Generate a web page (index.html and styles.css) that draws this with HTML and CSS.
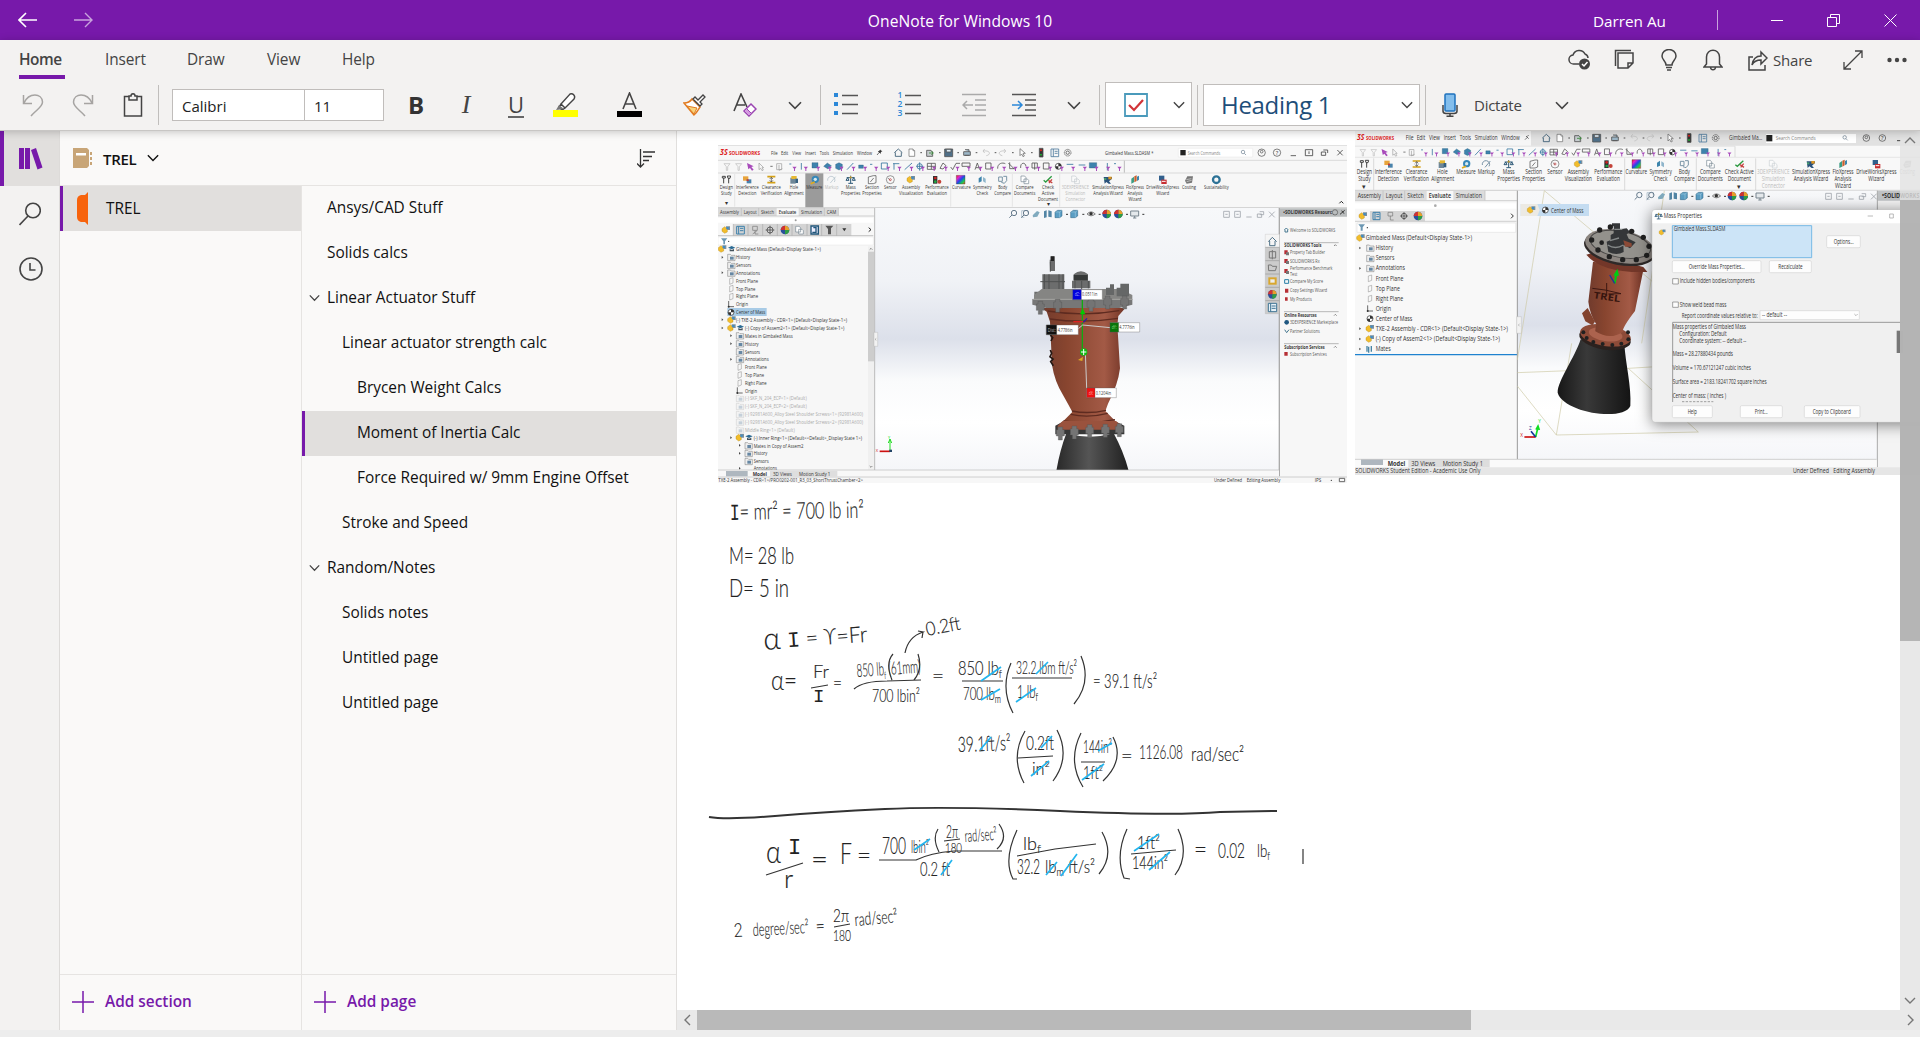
FILE: index.html
```html
<!DOCTYPE html>
<html lang="en">
<head>
<meta charset="utf-8">
<title>OneNote for Windows 10</title>
<link rel="stylesheet" href="styles.css">
</head>
<body>
<svg class="defs" width="0" height="0" aria-hidden="true">
  <defs>
    <symbol id="chev" viewBox="0 0 14 9"><path d="M1 1.2 7 7.4 13 1.2" fill="none" stroke="currentColor" stroke-width="1.6"/></symbol>
    <symbol id="plus" viewBox="0 0 22 22"><path d="M11 0V22M0 11H22" stroke="#7719aa" stroke-width="1.5"/></symbol>
    <g id="asm"><path d="M-12-4-4-10 4-4 4 6-4 10-12 4Z" fill="#f2bd2c" stroke="#a87d10"/><path d="M0-11H12V0H4L0-4Z" fill="#7d8f9c"/><path d="M2-9H8V-3H2Z" fill="#3d8fc4"/></g>
    <g id="cap"><path d="M-11-4 0-9 11-4 0 1Z" fill="#2c6b93"/><path d="M-6 0V7H7V0L0 3Z" fill="#45525c"/></g>
    <g id="fold"><path d="M-11-9H-3L0-6H11V10H-11Z" fill="#eee" stroke="#777" stroke-width="1.5"/><path d="M-4-2H7V7H-4Z" fill="#6687a3"/></g>
    <g id="plane"><path d="M-5-7 5-10V6L-5 10Z" fill="none" stroke="#888" stroke-width="1.5"/></g>
    <g id="org"><path d="M-7-10V7H9" fill="none" stroke="#222" stroke-width="2"/><circle cx="-7" cy="7" r="3"/></g>
    <g id="com"><circle r="9" fill="#fff" stroke="#222" stroke-width="2"/><path d="M0 0V-9A9 9 0 0 1 9 0ZM0 0V9A9 9 0 0 1-9 0Z"/></g>
    <g id="ball"><circle r="13" fill="#2a4f9b"/><path d="M0 0V-13A13 13 0 0 1 13 0Z" fill="#e7a02b"/><path d="M0 0H13A13 13 0 0 1 0 13Z" fill="#2f9d45"/><path d="M0 0H-13A13 13 0 0 1 0-13Z" fill="#cf3232"/></g>
    <g id="filt"><path d="M0 0H13L8 6V13H5V6Z" fill="#a84bbb"/></g>
    <g id="arr"><path d="M-2-4 3 0-2 4Z" fill="#444"/></g>
    <g id="doc" fill="#fff" stroke="#666" stroke-width="2"><path d="M-8-11H4L9-6V11H-8Z"/><path d="M4-11V-6H9"/></g>
    <g id="lens" fill="none" stroke="#687c8d" stroke-width="3"><circle cx="3" cy="-3" r="8"/><path d="M-3 3-11 11"/></g>
    <g id="cube"><path d="M-11-6-3-11H10V6L3 11H-11Z" fill="#5b9ec4" stroke="#2d6380" stroke-width="1.5"/><path d="M-11-6H3V11M3-6 10-11" stroke="#d9edf7" fill="none"/></g>
    <g id="sys" fill="none" stroke="#555" stroke-width="2.5">
      <path d="M-12 53 0 42 12 53M-9 52V64H9V52" stroke="#32566f"/>
      <use href="#doc" x="40" y="53"/><path d="M66 53H71M122 53H127M177 53H182M232 53H237M289 53H294M341 53H346M398 53H403" stroke="#333"/>
      <path d="M85 46H98L103 51V64H85Z" fill="#c7ccd0"/><path d="M92 54H104M99 49 105 54 99 59" stroke="#3a8a3a"/>
      <path d="M139 42H163V65H139Z" fill="#4f6f88"/><path d="M144 43H158V51H144Z" fill="#dcebf5"/>
      <path d="M196 50H216V61H196ZM200 44H212V50M199 61H213" fill="#9db7c8"/>
      <path d="M264 62C279 59 276 45 254 48M254 48 259 42M254 48 259 54" stroke="#c2c2c2"/><path d="M312 62C297 59 300 45 322 48M322 48 317 42M322 48 317 54" stroke="#c2c2c2"/>
      <path d="M365 41V62L370 57 374 65 378 63 374 55H381Z" stroke="#777" fill="#fff"/>
      <path d="M423 40H434V66H423Z" fill="#333"/><circle cx="428" cy="46" r="3" fill="#d22" stroke="none"/><circle cx="428" cy="59" r="3" fill="#2a3" stroke="none"/>
      <path d="M458 42H481V65H458ZM465 42V65M469 49H478M469 55H478" stroke="#4f7c9d"/>
      <circle cx="508" cy="53" r="10" stroke-dasharray="4 2"/><circle cx="508" cy="53" r="5"/>
    </g>
    <g id="filters">
      <g fill="none" stroke="#bbb" stroke-width="2"><path d="M42 86H60L53 95V106H49V95ZM77 86H95L88 95V106H84V95Z"/><path d="M147 84V104L152 100 156 107 160 105 156 98H161ZM200 86H215V104H200ZM207 90V106L217 101" stroke="#999"/></g>
      <path d="M111 84 131 94 124 96 131 104 126 107 120 99 115 103Z" fill="#a84bbb"/><path d="M181 94H188" stroke="#333" stroke-width="2"/>
      <g fill="none" stroke="#33749e" stroke-width="2.5">
        <path d="M238 87H244M274 84V104M411 104 430 84M480 88H487M514 84H532V102H514ZM549 86H568M552 86V104M584 104 606 84M629 82V107M619 94H640" />
        <circle cx="629" cy="94" r="8"/><path d="M652 85H676V103H652ZM664 85V103M652 94H676M690 100 699 84 708 92 699 102ZM722 96 728 104 738 85H750" stroke="#555"/>
        <path d="M756 84H780V94H756ZM795 104 802 84 809 104M798 98H806M827 84H843V102H827ZM863 101C862 84 878 82 886 86M895 84 914 103M899 82V101H914M932 99C930 82 946 80 948 94M966 84H982V99H966ZM974 84V104M1000 84H1017V102H1000Z" stroke="#555"/>
        <path d="M1070 88H1090M1106 90H1126M1192 84V106M1212 86H1218"/>
      </g>
      <g fill="#3e83ad" stroke="#235674"><path d="M306 83H324V99H306ZM341 94 352 84 364 92 354 102ZM377 88 387 83 397 88V100L387 105 377 100ZM446 90H460V100H446ZM1138 83H1160V99H1138Z"/></g>
      <g transform="translate(1045 94)"><use href="#com"/></g>
      <g><use href="#filt" x="247" y="95"/><use href="#filt" x="281" y="95"/><use href="#filt" x="318" y="95"/><use href="#filt" x="353" y="95"/><use href="#filt" x="388" y="95"/><use href="#filt" x="424" y="95"/><use href="#filt" x="459" y="95"/><use href="#filt" x="492" y="95"/><use href="#filt" x="528" y="95"/><use href="#filt" x="562" y="95"/><use href="#filt" x="598" y="95"/><use href="#filt" x="632" y="95"/><use href="#filt" x="666" y="95"/><use href="#filt" x="701" y="95"/><use href="#filt" x="736" y="95"/><use href="#filt" x="770" y="95"/><use href="#filt" x="805" y="95"/><use href="#filt" x="840" y="95"/><use href="#filt" x="876" y="95"/><use href="#filt" x="910" y="95"/><use href="#filt" x="945" y="95"/><use href="#filt" x="979" y="95"/><use href="#filt" x="1014" y="95"/><use href="#filt" x="1049" y="95"/><use href="#filt" x="1083" y="95"/><use href="#filt" x="1118" y="95"/><use href="#filt" x="1153" y="95"/><use href="#filt" x="1188" y="95"/><use href="#filt" x="1222" y="95"/></g>
    </g>
    <g id="i-study"><path d="M-12-10H-3V-5H-12ZM-8-5V11M3-11H13L11-4H5ZM7-4V11" stroke="#444" stroke-width="3" fill="none"/></g>
    <g id="i-inter"><path d="M-13-10H3V3H-13Z" fill="#e8a43b"/><path d="M-2-1H12V11H-2Z" fill="#4a83ab"/><path d="M-2-1H4V4H-2Z" fill="#c33"/></g>
    <g id="i-clear"><path d="M-12-9H12M-12 9H12" stroke="#d4a117" stroke-width="5"/><path d="M0-7V7M-5-2 0-7 5-2M-5 2 0 7 5 2" stroke="#444" stroke-width="2" fill="none"/></g>
    <g id="i-hole"><path d="M-11-6H5V12H-11Z" fill="#6e8798"/><path d="M-8-11H8V-2H-8Z" fill="#e6b832"/><path d="M4-3H12V10H4Z" fill="#35607f"/></g>
    <g id="i-meas"><circle cx="2" cy="-1" r="11" fill="#3687b9"/><circle cx="2" cy="-1" r="5" fill="#d7e9ef"/><path d="M-12 12 0 7" stroke="#dfaa1b" stroke-width="5"/></g>
    <g id="i-mark"><path d="M-12 3A11 11 0 1 1 8 7M-4 10 12-9" fill="none" stroke="#7b95a7" stroke-width="3"/></g>
    <g id="i-mass" fill="none" stroke="#2d5876" stroke-width="3"><path d="M0-12V11M-7 11H7M-12-6H12M-14 2H-5L-9-6ZM5 2H14L9-6Z"/><circle cy="-7" r="2" stroke="#e3a71f"/></g>
    <g id="i-sect" fill="none" stroke="#444" stroke-width="2"><path d="M-11-8 4-12H12V9L4 12H-11ZM-5 7 5-5"/></g>
    <g id="i-sens" fill="none" stroke="#666" stroke-width="2"><circle r="12"/><path d="M0 2-7-5"/><circle r="3" stroke="#b33"/></g>
    <g id="i-perf"><path d="M-12-11H1V12H-12Z" fill="#333"/><circle cx="-5" cy="-5" r="4" fill="#c22"/><circle cx="-5" cy="6" r="4" fill="#2a4"/><circle cx="7" cy="6" r="6" fill="#c34339"/></g>
    <linearGradient id="rain" x2="1" y2="1"><stop stop-color="#e22"/><stop offset=".25" stop-color="#d2c"/><stop offset=".5" stop-color="#24e"/><stop offset=".75" stop-color="#1c5"/><stop offset="1" stop-color="#e52"/></linearGradient>
    <g id="i-curv"><path d="M-13-13H13V13H-13Z" fill="url(#rain)" stroke="#333"/></g>
    <g id="i-symm"><path d="M-11 9V-4L-2-10V5Z" fill="#3e85ac"/><path d="M2-8 10-3V10L2 5Z" fill="#8fb5cb"/></g>
    <g id="i-body" fill="none" stroke="#7994a5" stroke-width="3"><path d="M-12-8H-1V5H-12ZM2-10H12V3L5 11-4 8"/></g>
    <g id="i-comp" fill="#fff" stroke="#778792" stroke-width="2"><path d="M-11-11H0L4-6V6H-11ZM-2-2H8L12 2V12H-2Z"/></g>
    <g id="i-check" fill="none" stroke="#2b9b40" stroke-width="4"><path d="M-13 2-7 7 11-10"/><path d="M1 2 13 10M3 10 12-1" stroke="#c64341"/></g>
    <g id="i-xp"><path d="M-13-8H12V-3L3 5 9 12H2L-5 7-10 12Z" fill="#2b527b"/><path d="M1-9H11V-1H1Z" fill="#db9522"/><path d="M-12-5H-5V1H-12Z" fill="#4a9b6e"/></g>
    <g id="i-flo"><path d="M-11-3-3-9V8L-11 12Z" fill="#3c9c84"/><path d="M-2-10 5-13V4L-2 8Z" fill="#c8602e"/><path d="M6-9 12-12V0L6 4Z" fill="#3d85ad"/></g>
    <g id="i-drive"><path d="M-11-12H5V3H-11Z" fill="#315f8c"/><path d="M-4 0H12V13H-4Z" fill="#c72e32"/><path d="M-2 5H9" stroke="#fff" stroke-width="3"/></g>
    <g id="i-cost"><path d="M-12 3-5-10H12L9 9-7 12Z" fill="#777"/><path d="M-8 0 7-3M-7 6 8 2" stroke="#ddd" stroke-width="2"/></g>
    <g id="view">
      <use href="#lens" x="0" y="0"/><path d="M26-10H45V-2M26-10V10H34" fill="none" stroke="#9bb1bf" stroke-width="2"/><use href="#lens" x="36" y="0"/><path d="M59 4 72-9 80-5 73 8 60 10Z" fill="#80aabe"/><path d="M93-8 101-11V10L93 12ZM106-11 116-8V10L106 8Z" fill="#5285a5"/><use href="#cube" x="137"/><path d="M159 1H165M208 1H214M257 1H263M339 1H345M388 1H394" stroke="#333" stroke-width="3"/><use href="#cube" x="184"/><path d="M222 0Q234-13 247 0 234 11 222 0Z" fill="#ddd" stroke="#555" stroke-width="2"/><circle cx="234" cy="-1" r="5" fill="#333"/><use href="#ball" x="281"/><use href="#ball" x="316"/><path d="M353-9H377V6H353ZM360 12H370M365 6V12" fill="#e5e9ec" stroke="#78858f" stroke-width="3"/>
    </g>
    <g id="mdi" fill="none" stroke="#a1a6ad" stroke-width="2.5"><path d="M0-9H17V9H0M0-9V9M5 0H12M33-9H50V9H33ZM38 0H45M68 8H84M108-8H120V1H108M101-1H114V9H101ZM136-8 153 9M153-8 136 9"/></g>
    <linearGradient id="bg1" x2="0" y2="1"><stop stop-color="#f7f8fa"/><stop offset=".28" stop-color="#f0f2f6"/><stop offset=".5" stop-color="#dce0ea"/><stop offset=".66" stop-color="#fafbfc"/><stop offset=".82" stop-color="#fff"/><stop offset="1" stop-color="#f5f6f9"/></linearGradient>
    <linearGradient id="copper"><stop stop-color="#713b2d"/><stop offset=".3" stop-color="#88452f"/><stop offset=".75" stop-color="#a35a46"/><stop offset="1" stop-color="#713426"/></linearGradient>
    <linearGradient id="blackm"><stop stop-color="#292929"/><stop offset=".45" stop-color="#555"/><stop offset="1" stop-color="#202020"/></linearGradient>
    <linearGradient id="blackn"><stop stop-color="#171717"/><stop offset=".4" stop-color="#393939"/><stop offset="1" stop-color="#141414"/></linearGradient>
    <g id="bolt"><path d="M-7-17H7V-9H12V10H6V22H-6V10H-12V-9H-7Z" fill="#747474" stroke="#505050"/></g>
  </defs>
</svg>

<header class="titlebar">
  <nav class="history">
    <svg width="20" height="16" viewBox="0 0 20 16"><path d="M19 8H1M8 1 1 8 8 15" fill="none" stroke="#fff" stroke-width="1.6"/></svg>
    <svg class="dim" width="20" height="16" viewBox="0 0 20 16"><path d="M1 8H19M12 1 19 8 12 15" fill="none" stroke="#fff" stroke-width="1.4"/></svg>
  </nav>
  <div class="app-name">OneNote for Windows 10</div>
  <div class="window-side">
    <span class="user">Darren Au</span><i class="tsep"></i>
    <span class="winbtn"><svg width="12" height="12"><path d="M0 6.5H12" stroke="#fff"/></svg></span>
    <span class="winbtn"><svg width="13" height="13"><path d="M.5 3.5H9.500V12.500H.5ZM3.500 3V.5H12.500V9.500H10" fill="none" stroke="#fff"/></svg></span>
    <span class="winbtn"><svg width="13" height="13"><path d="M.5.5 12.500 12.500M12.500.5.5 12.500" stroke="#fff"/></svg></span>
  </div>
</header>

<section class="ribbon">
  <div class="tabs">
    <div class="tablist"><a class="tab active">Home</a><a class="tab">Insert</a><a class="tab">Draw</a><a class="tab">View</a><a class="tab">Help</a></div>
    <div class="quick">
      <span class="q cloud"><svg width="24" height="22" viewBox="0 0 24 22" fill="none" stroke="#444" stroke-width="1.5"><path d="M11 15H6A4.500 4.500 0 0 1 5 6 6.500 6.500 0 0 1 17 5 4.500 4.500 0 0 1 20 9"/><circle cx="16.500" cy="15" r="5.500" fill="#444" stroke="none"/><path d="M14 15 16 17 19.500 13" stroke="#fff"/></svg></span>
      <span class="q"><svg width="22" height="22" viewBox="0 0 22 22" fill="none" stroke="#444" stroke-width="1.500"><path d="M5 4H20V14L15 19H5ZM20 14H15V19M18 1.500H2.500V17"/></svg></span>
      <span class="q"><svg width="18" height="22" viewBox="0 0 18 22" fill="none" stroke="#444" stroke-width="1.500"><path d="M6 16C6 12 2 11 2 7A7 6.500 0 0 1 16 7C16 11 12 12 12 16ZM6 18.500H12M7 21H11"/></svg></span>
      <span class="q"><svg width="20" height="22" viewBox="0 0 20 22" fill="none" stroke="#444" stroke-width="1.500"><path d="M1 18H19L16.500 15V8C16.500-1 3.500-1 3.500 8V15ZM7.500 18.500C8 21.500 12 21.500 12.500 18.500"/></svg></span>
      <span class="q share"><svg width="20" height="22" viewBox="0 0 20 22" fill="none" stroke="#444" stroke-width="1.500"><path d="M5 8H1V21H17V16M4 16C5 10 8 7 13 7V3L19 9 13 15V11C9 11 6 12 4 16Z"/></svg>Share</span>
      <span class="q"><svg width="20" height="20" viewBox="0 0 20 20" fill="none" stroke="#444" stroke-width="1.300"><path d="M1 19 19 1M12 1H19V8M1 12V19H8"/></svg></span>
      <span class="q"><svg width="20" height="6" fill="#444"><circle cx="2.500" cy="3" r="2.200"/><circle cx="10" cy="3" r="2.200"/><circle cx="17.500" cy="3" r="2.200"/></svg></span>
    </div>
  </div>
  <div class="tools">
    <span class="cell"><svg width="22" height="24" viewBox="0 0 22 24" fill="none" stroke="#a6a4a2" stroke-width="1.500"><path d="M1.500 2V10.500H10M2 10C7-1 20 0 20.500 9 20.500 14 14 17 9 23"/></svg></span>
    <span class="cell"><svg width="22" height="24" viewBox="0 0 22 24" fill="none" stroke="#a6a4a2" stroke-width="1.500"><path d="M20.500 2V10.500H12M20 10C15-1 2 0 1.500 9 1.500 14 8 17 13 23"/></svg></span>
    <span class="cell"><svg width="20" height="24" viewBox="0 0 20 24" fill="none" stroke="#444" stroke-width="1.500"><path d="M6 3.500H1.500V23H18.500V3.500H14M6 3V7H14V3H12C12 0 8 0 8 3Z"/></svg></span>
    <i class="sep"></i>
    <div class="fontbox"><span class="face">Calibri</span><span class="size">11</span></div>
    <span class="cell first"><b class="glyph bold">B</b></span>
    <span class="cell"><i class="glyph ital">I</i></span>
    <span class="cell"><span class="glyph under">U</span></span>
    <span class="cell"><svg width="26" height="26" viewBox="0 0 26 26"><path d="M8 12 17 2C20 1 23 4 21 7L12 16ZM8 12 12 16 9 18 6 15Z" fill="#fff" stroke="#444" stroke-width="1.400"/><path d="M3 18 6 13 11 17Z" fill="#777"/><path d="M0 18H25V25H0Z" fill="#ff0"/></svg></span>
    <span class="cell c78"><svg width="26" height="26" viewBox="0 0 26 26"><path d="M6 17 12.500 1 19 17M8 12H17" fill="none" stroke="#444" stroke-width="1.600"/><path d="M0 19H25V25H0Z"/></svg></span>
    <span class="cell c52"><svg width="24" height="22" viewBox="0 0 24 22"><path d="M1 9C5 9 7 8 9 5L17 13C15 16 14 19 11 21Z" fill="#fff" stroke="#e27b20" stroke-width="1.500"/><path d="M4 12 14 14 11 20Z" fill="#f8d37a" stroke="#e27b20"/><path d="M10 5 17 12 19 10 17 8 22 3 20 1 15 6 12 3Z" fill="#fff" stroke="#444" stroke-width="1.300"/></svg></span>
    <span class="cell c48"><svg width="24" height="24" viewBox="0 0 24 24"><path d="M1 18 8 1 14 14M4 12H12" fill="none" stroke="#444" stroke-width="1.600"/><path d="M18 11 23 16 16 23 11 18Z" fill="#fff" stroke="#9b45b2" stroke-width="1.500"/><path d="M13.500 15.500 18.500 20.500 16 23 11 18Z" fill="#d49ae0" stroke="#9b45b2"/></svg></span>
    <span class="cell c51"><svg class="chev" width="14" height="9"><use href="#chev"/></svg></span>
    <i class="sep"></i>
    <span class="cell c49"><svg width="24" height="24"><path d="M0 0H4V4H0ZM0 9H4V13H0ZM0 18H4V22H0Z" fill="#2b88d8"/><path d="M8 2.500H24M8 11.500H24M8 20.500H24" stroke="#555" stroke-width="1.500"/></svg></span>
    <span class="cell c79 numcell"><span class="nums"><b>1</b><b>2</b><b>3</b></span><svg width="16" height="24"><path d="M0 2.500H16M0 11.500H16M0 20.500H16" stroke="#555" stroke-width="1.500"/></svg></span>
    <span class="cell c49"><svg width="24" height="24" fill="none" stroke="#aaa" stroke-width="1.500"><path d="M0 1.500H24M13 7H24M13 12H24M13 17H24M0 22.500H24M1 12H11M5 8 1 12 5 16"/></svg></span>
    <span class="cell c51"><svg width="24" height="24" fill="none" stroke="#555" stroke-width="1.500"><path d="M0 1.500H24M13 7H24M13 12H24M13 17H24M0 22.500H24"/><path d="M0 12H10M6 8 10 12 6 16" stroke="#2b88d8"/></svg></span>
    <span class="cell"><svg class="chev" width="14" height="9"><use href="#chev"/></svg></span>
    <i class="sep"></i>
    <div class="todo"><svg width="24" height="24"><path d="M1 1H23V23H1Z" fill="#fff" stroke="#4a9abb" stroke-width="1.800"/><path d="M5 12 10 17 19 7" fill="none" stroke="#d13438" stroke-width="2.200"/></svg><svg class="chev" width="12" height="8"><use href="#chev"/></svg></div>
    <i class="sep"></i>
    <div class="styles"><span>Heading 1</span><svg class="chev" width="12" height="8"><use href="#chev"/></svg></div>
    <i class="sep"></i>
    <div class="dictate"><svg width="16" height="24" viewBox="0 0 16 24"><path d="M1 12V18Q1 20.500 4 20.500H12Q15 20.500 15 18V12M8 21V23M4.500 23.200H11.500" fill="none" stroke="#444" stroke-width="1.500"/><rect x="3" y="1" width="10" height="17" rx="1" fill="#83beec" stroke="#1e72bd" stroke-width="1.500"/></svg><span>Dictate</span><svg class="chev" width="14" height="9"><use href="#chev"/></svg></div>
  </div>
</section>

<main class="work">
  <aside class="rail">
    <span class="rail-item on"><svg width="24" height="22" viewBox="0 0 24 22" fill="#7719aa"><path d="M0 0H5V21H0ZM6 0H11V21H6ZM12 2 17 0 23.500 19.500 18.500 21.500Z"/></svg></span>
    <span class="rail-item"><svg width="22" height="24" viewBox="0 0 22 24" fill="none" stroke="#444" stroke-width="1.600"><circle cx="14" cy="8.500" r="7.300"/><path d="M9 14 .5 23"/></svg></span>
    <span class="rail-item"><svg width="24" height="24" viewBox="0 0 24 24" fill="none" stroke="#444" stroke-width="1.600"><circle cx="12" cy="12" r="11"/><path d="M11 6V13H16.500"/></svg></span>
  </aside>
  <div class="nav">
    <div class="notebook">
      <svg width="20" height="20" viewBox="0 0 20 20"><path d="M0 0H14L16 2V18L14 20H0Z" fill="#c8a577"/><path d="M3 5H13V7.500H3Z" fill="#fff"/><path d="M17 4H19V7H17ZM17 9H19V12H17ZM17 14H19V17H17Z" fill="#c8a577"/></svg>
      <b>TREL</b><svg class="chev dark" width="12" height="8"><use href="#chev"/></svg>
      <svg class="sort" width="18" height="19" viewBox="0 0 18 19" fill="none" stroke="#333" stroke-width="1.300"><path d="M3.500 0V18M0 14.500 3.500 18 7 14.500M6 3H18M6 7.500H15M6 11.500H12"/></svg>
    </div>
    <div class="cols">
      <div class="sections">
        <div class="row sel"><svg width="11" height="33" viewBox="0 0 11 33"><path d="M11 0V33L8 30H4Q0 29 0 25V8Q0 4 4 3H8Z" fill="#f7630c"/></svg><span>TREL</span></div>
        <div class="add"><svg width="22" height="22"><use href="#plus"/></svg><span>Add section</span></div>
      </div>
      <div class="pages">
        <div class="row">Ansys/CAD Stuff</div>
        <div class="row">Solids calcs</div>
        <div class="row parent"><svg class="chev" width="11" height="8"><use href="#chev"/></svg>Linear Actuator Stuff</div>
        <div class="row l1">Linear actuator strength calc</div>
        <div class="row l2">Brycen Weight Calcs</div>
        <div class="row l2 sel">Moment of Inertia Calc</div>
        <div class="row l2">Force Required w/ 9mm Engine Offset</div>
        <div class="row l1">Stroke and Speed</div>
        <div class="row parent"><svg class="chev" width="11" height="8"><use href="#chev"/></svg>Random/Notes</div>
        <div class="row l1">Solids notes</div>
        <div class="row l1">Untitled page</div>
        <div class="row l1">Untitled page</div>
        <div class="add"><svg width="22" height="22"><use href="#plus"/></svg><span>Add page</span></div>
      </div>
    </div>
  </div>

  <div class="canvas">
    <svg class="shot shot-a" viewBox="24 30 1887 1014">
      <path d="M24 30H1911V1044H24Z" fill="#f7f7f7"/>
      <path d="M24 31H1911" stroke="#ddd" stroke-width="3"/>
      <text x="30" y="60" fill="#d22" font-size="25" font-weight="700" font-style="italic" textLength="23">ƷS</text><text x="57" y="60" fill="#d22" font-weight="700" textLength="93">SOLIDWORKS</text>
      <text x="183" y="59" textLength="20">File</text><text x="213" y="59" textLength="22">Edit</text><text x="247" y="59" textLength="26">View</text><text x="285" y="59" textLength="33">Insert</text><text x="329" y="59" textLength="28">Tools</text><text x="368" y="59" textLength="61">Simulation</text><text x="441" y="59" textLength="45">Window</text>
      <path d="M501 60 508 52M504 48 512 56M506 50 511 45 515 49 510 54" stroke="#333" stroke-width="2"/>
      <use href="#sys" x="565"/>
      <text x="1185" y="59" textLength="145">Gimbaled Mass.SLDASM *</text>
      <path d="M1405 40H1628V66H1405Z" fill="#fff" stroke="#ddd"/><path d="M1411 45H1427V61H1411Z" fill="#222"/><text x="1433" y="59" fill="#888" textLength="98">Search Commands</text><g transform="translate(1601 53) scale(-.65 .65)"><use href="#lens"/></g>
      <g fill="none" stroke="#444" stroke-width="2"><circle cx="1655" cy="53" r="11"/><circle cx="1655" cy="50" r="4"/><circle cx="1701" cy="53" r="11"/><path d="M1742 62H1758M1786 44H1808V62H1786ZM1797 49V57M1840 45H1853V54M1834 51H1847V61H1834ZM1882 45 1898 61M1898 45 1882 61" stroke-width="2.500"/></g><text x="1697" y="60">?</text>
      <path d="M24 76H1911M24 114H1911" stroke="#ccc" stroke-width="2"/><path d="M1243 77V113" stroke="#bbb" stroke-width="3"/>
      <use href="#filters"/>
      <path d="M286 115H340V217H286Z" fill="#9b9b9b"/><path d="M74 117V215M722 117V215M907 117V215M1049 117V215" stroke="#ddd" stroke-width="2"/>
      <g class="mid">
        <use href="#i-study" x="49" y="134"/><use href="#i-inter" x="112" y="134"/><use href="#i-clear" x="184" y="134"/><use href="#i-hole" x="252" y="134"/><use href="#i-meas" x="314" y="134"/><use href="#i-mark" x="365" y="134" opacity=".4"/><use href="#i-mass" x="422" y="134"/><use href="#i-sect" x="486" y="134"/><use href="#i-sens" x="541" y="134"/><use href="#asm" x="603" y="134"/><use href="#i-perf" x="681" y="134"/><use href="#i-curv" x="752" y="134"/><use href="#i-symm" x="817" y="134"/><use href="#i-body" x="878" y="134"/><use href="#i-comp" x="944" y="134"/><use href="#i-check" x="1014" y="134"/><use href="#i-comp" x="1096" y="134" opacity=".4"/><use href="#i-xp" x="1194" y="134"/><use href="#i-flo" x="1275" y="134"/><use href="#i-drive" x="1358" y="134"/><use href="#i-cost" x="1437" y="134"/><g transform="translate(1519 134)"><circle r="10" fill="none" stroke="#2c7296" stroke-width="7"/></g>
        <text x="49" y="163" textLength="40">Design</text><text x="49" y="180" textLength="32">Study</text><text x="49" y="211">▾</text>
        <text x="112" y="163" textLength="68">Interference</text><text x="112" y="180" textLength="54">Detection</text><text x="184" y="163" textLength="57">Clearance</text><text x="184" y="180" textLength="64">Verification</text><text x="252" y="163" textLength="25">Hole</text><text x="252" y="180" textLength="59">Alignment</text><text x="313" y="163" textLength="48">Measure</text><text x="365" y="163" textLength="41" fill="#bbb">Markup</text><text x="422" y="163" textLength="30">Mass</text><text x="422" y="180" textLength="58">Properties</text><text x="486" y="163" textLength="42">Section</text><text x="486" y="180" textLength="58">Properties</text><text x="541" y="163" textLength="38">Sensor</text><text x="603" y="163" textLength="54">Assembly</text><text x="603" y="180" textLength="72">Visualization</text><text x="681" y="163" textLength="71">Performance</text><text x="681" y="180" textLength="60">Evaluation</text><text x="754" y="163" textLength="56">Curvature</text><text x="817" y="163" textLength="56">Symmetry</text><text x="817" y="180" textLength="35">Check</text><text x="878" y="163" textLength="27">Body</text><text x="878" y="180" textLength="50">Compare</text><text x="944" y="163" textLength="53">Compare</text><text x="944" y="180" textLength="64">Documents</text><text x="1014" y="163" textLength="36">Check</text><text x="1014" y="180" textLength="38">Active</text><text x="1014" y="197" textLength="60">Document</text><text x="1014" y="213">▾</text>
        <g fill="#bbb"><text x="1096" y="163" textLength="82">3DEXPERIENCE</text><text x="1096" y="180" textLength="60">Simulation</text><text x="1096" y="197" textLength="59">Connector</text></g><text x="1194" y="163" textLength="95">SimulationXpress</text><text x="1194" y="180" textLength="88">Analysis Wizard</text><text x="1275" y="163" textLength="54">FloXpress</text><text x="1275" y="180" textLength="45">Analysis</text><text x="1275" y="197" textLength="39">Wizard</text><text x="1358" y="163" textLength="98">DriveWorksXpress</text><text x="1358" y="180" textLength="39">Wizard</text><text x="1437" y="163" textLength="42">Costing</text><text x="1519" y="163" textLength="74">Sustainability</text>
      </g>
      <path d="M1888 205 1894 199 1900 205" fill="none" stroke="#222" stroke-width="3"/>
      <path d="M24 219H385V243H24Z" fill="#dadada"/><path d="M200 219H266V243H200Z" fill="#f8f8f8"/><path d="M24 218H1911M24 243H494M94 219V243M146 219V243M343 219V243M385 219V243" stroke="#bbb" stroke-width="2"/>
      <text x="30" y="237" textLength="57">Assembly</text><text x="101" y="237" textLength="39">Layout</text><text x="153" y="237" textLength="39">Sketch</text><text x="206" y="237" textLength="53" font-weight="600">Evaluate</text><text x="273" y="237" textLength="63">Simulation</text><text x="350" y="237" textLength="29">CAM</text>
      <path d="M24 249H490V263H24Z" fill="#fff"/><circle cx="257" cy="256" r="3" fill="#999"/>
      <path d="M70 267H424V302H70Z" fill="#d4d4d4"/><path d="M70 267V302M114 267V302M158 267V302M202 267V302M246 267V302M291 267V302M335 267V302M380 267V302M24 302H490" stroke="#aaa" stroke-width="2"/>
      <use href="#asm" x="48" y="285"/><path d="M80 274H103V297H80ZM86 274V297M90 280H100M90 287H100" fill="none" stroke="#3e81ab" stroke-width="3"/><path d="M128 274H142V286H128ZM135 286V297H145M128 297 141 287" fill="none" stroke="#777" stroke-width="2"/><path d="M180 272V298M167 285H193" stroke="#333" stroke-width="2"/><circle cx="180" cy="285" r="9" fill="none" stroke="#333" stroke-width="2"/><use href="#ball" x="225" y="285"/><use href="#i-comp" x="268" y="285"/><path d="M303 273H325V297H303ZM310 278H318V292H307" fill="#eef" stroke="#1f5579" stroke-width="4"/><path d="M346 272H370L363 280V298H354V282Z" fill="#555"/><path d="M397 280H409L403 289Z"/><path d="M476 278 483 284 476 290" fill="none" stroke="#222" stroke-width="3"/>
      <path d="M24 306H490V330H24Z" fill="#fff" stroke="#ddd"/><path d="M33 310H52L45 319V328H40V319Z" fill="#6d98b3"/><circle cx="56" cy="319" r="2"/>
      <path d="M474 334H492V1004H474Z" fill="#f0f0f0"/><path d="M474 350H492V679H474Z" fill="#cdcdcd"/><path d="M479 344 483 340 487 344M479 993 483 997 487 993" fill="none" stroke="#555" stroke-width="2"/>
      <path d="M52 519H170V543H52Z" fill="#a8cbe6"/>
      <use href="#asm" x="37" y="342"/><use href="#cap" x="65" y="342"/><use href="#arr" x="37" y="367"/><use href="#fold" x="64" y="367"/><use href="#fold" x="64" y="391"/><use href="#arr" x="37" y="413"/><use href="#fold" x="64" y="414"/><use href="#plane" x="64" y="438"/><use href="#plane" x="64" y="461"/><use href="#plane" x="64" y="485"/><use href="#org" x="63" y="508"/><use href="#com" x="63" y="532"/><use href="#arr" x="37" y="554"/><use href="#asm" x="65" y="555"/><use href="#arr" x="37" y="579"/><use href="#asm" x="65" y="579"/><use href="#cap" x="91" y="579"/><use href="#arr" x="63" y="602"/><use href="#fold" x="90" y="602"/><use href="#arr" x="63" y="626"/><use href="#fold" x="90" y="626"/><use href="#fold" x="90" y="650"/><use href="#arr" x="63" y="673"/><use href="#fold" x="90" y="673"/><use href="#plane" x="89" y="696"/><use href="#plane" x="89" y="720"/><use href="#plane" x="89" y="744"/><use href="#org" x="89" y="767"/>
      <g opacity=".35"><use href="#fold" x="90" y="790"/><use href="#fold" x="90" y="814"/><use href="#fold" x="90" y="838"/><use href="#fold" x="90" y="861"/><use href="#fold" x="90" y="885"/></g><use href="#arr" x="63" y="908"/><use href="#asm" x="90" y="908"/><use href="#cap" x="117" y="908"/><use href="#arr" x="89" y="931"/><use href="#fold" x="116" y="932"/><use href="#arr" x="89" y="955"/><use href="#fold" x="116" y="955"/><use href="#fold" x="116" y="979"/><use href="#arr" x="89" y="1000"/>
      <g>
        <text x="78" y="348" textLength="254">Gimbaled Mass  (Default&lt;Display State-1&gt;)</text><text x="78" y="373" textLength="42">History</text><text x="78" y="396" textLength="46">Sensors</text><text x="78" y="420" textLength="72">Annotations</text><text x="78" y="443" textLength="66">Front Plane</text><text x="78" y="467" textLength="58">Top Plane</text><text x="78" y="490" textLength="66">Right Plane</text><text x="78" y="514" textLength="36">Origin</text><text x="78" y="538" textLength="88">Center of Mass</text><text x="78" y="561" textLength="333">(-) TXE-2 Assembly - CDR&lt;1&gt; (Default&lt;Display State-1&gt;)</text><text x="105" y="585" textLength="298">(-) Copy of Assem2&lt;1&gt; (Default&lt;Display State-1&gt;)</text><text x="105" y="608" textLength="143">Mates in Gimbaled Mass</text><text x="105" y="632" textLength="41">History</text><text x="105" y="656" textLength="45">Sensors</text><text x="105" y="679" textLength="71">Annotations</text><text x="105" y="702" textLength="65">Front Plane</text><text x="105" y="726" textLength="57">Top Plane</text><text x="105" y="750" textLength="65">Right Plane</text><text x="105" y="773" textLength="36">Origin</text>
        <g fill="#aaa"><text x="105" y="796" textLength="185">(-) SKF_N_204_ECP&lt;1&gt; (Default)</text><text x="105" y="820" textLength="185">(-) SKF_N_204_ECP&lt;2&gt; (Default)</text><text x="105" y="844" textLength="354">(-) 92981A600_Alloy Steel Shoulder Screws&lt;1&gt; (92981A600)</text><text x="105" y="867" textLength="354">(-) 92981A600_Alloy Steel Shoulder Screws&lt;2&gt; (92981A600)</text><text x="105" y="891" textLength="149">Middle Ring&lt;1&gt; (Default)</text></g>
        <text x="131" y="914" textLength="325">(-) Inner Ring&lt;1&gt; (Default&lt;&lt;Default&gt;_Display State 1&gt;)</text><text x="131" y="938" textLength="149">Mates in Copy of Assem2</text><text x="131" y="961" textLength="41">History</text><text x="131" y="985" textLength="45">Sensors</text><text x="131" y="1006" textLength="70">Annotations</text>
      </g>
      <path d="M494 219H1707V1005H494Z" fill="url(#bg1)"/><path d="M494 219V1005" stroke="#bbb" stroke-width="3"/><path d="M492 592H503V634H492Z" fill="#f2f2f2" stroke="#aaa"/><path d="M499 610 495 613 499 616" fill="none" stroke="#555"/>
      <use href="#view" x="909" y="237"/><use href="#mdi" x="1541" y="238"/>
      <g fill="none" stroke-width="3"><path d="M540 948V913M535 924 540 912 545 924" stroke="#2d2"/><path d="M540 949H509" stroke="#c11" stroke-width="5"/><path d="M538 944H546V951H538Z" fill="#246"/></g><text x="534" y="912" fill="#2d2" font-size="12">Y</text><text x="497" y="951" fill="#c11" font-size="12">X</text>
      <g transform="translate(870 0)">
        <path d="M150 408H165V364H152V374H149ZM127 418H193V470H204V492H103V470H127ZM221 418Q243 400 264 418V437H271V460H216V437H221Z" fill="#6c6d6d"/><path d="M152 364H162V378H152Z" fill="#222"/><path d="M221 420H263V436H221Z" fill="#363938"/>
        <g fill="none" stroke="#4e5050" stroke-width="3"><path d="M133 418V470M147 418V476M177 418V470M189 418V470M121 440H195M225 438V460M245 438V462M265 438V460M151 380V410"/></g>
        <path d="M102 480 125 462H360L397 480V494H102Z" fill="#858583"/><path d="M97 492H397V509L355 520H142L97 509Z" fill="#777"/><path d="M98 493H396" stroke="#a6a6a3" stroke-width="3"/><path d="M318 458H330V448H342V480H318ZM350 458H361V446H387V484H350Z" fill="#656767"/>
        <path d="M124 519H376L355 543 352 570 360 700Q354 750 324 806L316 828 348 860H188L217 831Q207 812 189 780 164 740 156 690L150 560 140 530Z" fill="url(#copper)"/><path d="M143 528Q250 546 358 527M150 552Q250 566 354 550M216 828Q264 838 318 826M212 838Q264 850 323 835M190 858Q268 870 345 854" fill="none" stroke="#5e2b20" stroke-width="4"/>
        <path d="M151 600 158 608 153 618M151 645 155 655 150 665 159 672 152 680 160 692" fill="none" stroke="#241713" stroke-width="5"/>
        <path d="M188 860H348L373 872V898H166V872Z" fill="#373737"/><path d="M188 858H348L365 872V884H173V872Z" fill="#9a523d"/><path d="M199 895Q270 915 341 895Q370 948 386 1007H169Q180 945 199 895Z" fill="url(#blackm)"/>
        <use href="#bolt" x="121" y="516"/><use href="#bolt" x="173" y="510"/><use href="#bolt" x="273" y="507"/><use href="#bolt" x="323" y="500"/><use href="#bolt" x="374" y="500"/><use href="#bolt" x="181" y="893"/><use href="#bolt" x="223" y="890"/><use href="#bolt" x="269" y="886"/><use href="#bolt" x="316" y="885"/><use href="#bolt" x="358" y="883"/>
        <path d="M247 494V640" stroke="#1a1" stroke-width="4"/><path d="M240 538 248 520 256 538Z" fill="#0c0"/><path d="M220 560H250" stroke="#d22" stroke-width="4"/><path d="M250 562 261 550" stroke="#22a" stroke-width="4"/><path d="M235 581 248 570 332 578M256 650 260 760" fill="none" stroke="#ccc" stroke-width="3"/><circle cx="251" cy="651" r="11" fill="#1b1"/><path d="M243 651H259M251 642V660" stroke="#fff" stroke-width="3"/><path d="M234 675 249 665 247 678Z" fill="#da2"/>
        <g stroke="#555"><path d="M218 464H307V494H218Z" fill="#fff"/><path d="M218 464H244V494H218Z" fill="#00d"/><path d="M139 570H235V599H139Z" fill="#fff"/><path d="M139 570H170V599H139Z" fill="#111"/><path d="M330 563H419V591H330Z" fill="#fff"/><path d="M330 563H356V591H330Z" fill="#087508"/><path d="M260 759H349V788H260Z" fill="#fff"/><path d="M260 759H285V788H260Z" fill="#e11"/></g>
        <text x="224" y="484" fill="#aaf" textLength="15">dZ:</text><text x="246" y="484" textLength="46">0.0511in</text><text x="143" y="591" fill="#bbb" textLength="24">Dist:</text><text x="173" y="591" textLength="45">4.7786in</text><text x="335" y="583" fill="#8d8" textLength="15">dY:</text><text x="358" y="583" textLength="46">4.7776in</text><text x="266" y="780" fill="#faa" textLength="14">dX:</text><text x="287" y="780" textLength="46">0.1204in</text>
        <path d="M838 219H1041V1024H838Z" fill="#f7f7f7"/><path d="M838 219V1024" stroke="#aaa" stroke-width="4"/><path d="M840 220H1041V245H840Z" fill="#b9bcbd"/><text x="850" y="238" font-weight="700" textLength="146">•SOLIDWORKS Resourc</text><circle cx="1005" cy="232" r="8" fill="none" stroke="#555" stroke-width="2"/><path d="M1020 238 1034 226M1025 227 1032 236" stroke="#333" stroke-width="3"/>
        <path d="M796 298H838V536H796Z" fill="#ccc" stroke="#aaa"/><path d="M796 298H838V337H796Z" fill="#f5f5f5"/><path d="M796 337H838M796 377H838M796 417H838M796 457H838M796 497H838" stroke="#999" stroke-width="2"/><g fill="none" stroke="#4f7187" stroke-width="3"><path d="M805 320 817 307 830 320M809 318V332H825V318"/><path d="M808 350H827V369H808ZM817 345V373M805 390H814L817 394H830L826 407H806Z" stroke="#777"/></g><path d="M805 427H830V449H805Z" fill="#d9a72e"/><path d="M811 433H824V443H811Z" fill="#eee"/><use href="#ball" x="817" y="478"/><path d="M805 505H830V530H805ZM812 505V530M815 513H827M815 520H827" fill="#e7f1f7" stroke="#3e7393" stroke-width="3"/>
        <g fill="#555"><text x="870" y="290" textLength="136">Welcome to SOLIDWORKS</text><text x="870" y="357" textLength="105">Property Tab Builder</text><text x="870" y="384" textLength="89">SOLIDWORKS Rx</text><text x="870" y="406" textLength="127">Performance Benchmark</text><text x="870" y="422" textLength="22">Test</text><text x="870" y="445" textLength="99">Compare My Score</text><text x="870" y="472" textLength="111">Copy Settings Wizard</text><text x="870" y="498" textLength="65">My Products</text><text x="870" y="567" textLength="144">3DEXPERIENCE Marketplace</text><text x="870" y="594" textLength="89">Partner Solutions</text><text x="870" y="663" textLength="110">Subscription Services</text></g>
        <g font-weight="700"><text x="853" y="336" textLength="111">SOLIDWORKS Tools</text><text x="853" y="545" textLength="97">Online Resources</text><text x="853" y="641" textLength="121">Subscription Services</text></g><path d="M852 323H1016M852 530H1016M852 626H1016" stroke="#999" stroke-width="2"/><path d="M1002 333 1006 329 1010 333M1002 542 1006 538 1010 542M1002 638 1006 634 1010 638" fill="none" stroke="#555" stroke-width="2"/>
        <g fill="#b62f35"><path d="M853 346H863V358H853ZM853 372H863V384H853ZM853 402H863V414H853ZM855 461H865V473H855ZM855 487H863V497H855ZM853 651H863V662H853Z"/><path d="M858 352H867V361H858ZM858 378H867V387H858ZM858 408H867V417H858Z" fill="#777"/></g><path d="M854 434H866V445H854Z" fill="none" stroke="#277da5" stroke-width="3"/><circle cx="860" cy="562" r="7" fill="#205881"/><path d="M853 285 859 279 865 285M855 285V291H863V285M854 584 860 593 867 584" fill="none" stroke="#477890" stroke-width="3"/>
      </g>
      <path d="M24 1005H1707V1025H24Z" fill="#f8f8f8"/><path d="M24 1005H1707M24 1026H1911" stroke="#bbb" stroke-width="2"/><path d="M48 1008H113V1024H48Z" fill="#aeb7bf"/><path d="M180 1007H382V1025H180Z" fill="#dedede"/><text x="128" y="1022" font-weight="700" textLength="43">Model</text><text x="189" y="1022" textLength="57">3D Views</text><text x="267" y="1022" textLength="94">Motion Study 1</text>
      <g font-size="16"><text x="25" y="1040" textLength="434">TXE-2 Assembly - CDR&lt;1&gt;/PRO0202-001_R3_03_ShortThrustChamber&lt;2&gt;</text><text x="1512" y="1040" textLength="84">Under Defined</text><text x="1610" y="1040" textLength="101">Editing Assembly</text><text x="1814" y="1040" textLength="20">IPS</text></g><circle cx="1864" cy="1036" r="2"/><path d="M1888 1030H1904V1040H1888Z" fill="none" stroke="#666" stroke-width="3"/>
    </svg>

    <svg class="shot shot-b" viewBox="30 3 1695 1032">
      <path d="M30 3H1725V1035H30Z" fill="#f8f8f8"/><path d="M30 3H1725V47H30Z" fill="#e1e1e1"/><path d="M30 3H558V47H30Z" fill="#f6f6f6"/>
      <text x="36" y="29" fill="#d22" font-size="25" font-weight="700" font-style="italic" textLength="22">ƷS</text><text x="63" y="30" fill="#d22" font-weight="700" textLength="84">SOLIDWORKS</text>
      <g class="wide"><text x="182" y="31" textLength="24">File</text><text x="215" y="31" textLength="26">Edit</text><text x="252" y="31" textLength="33">View</text><text x="296" y="31" textLength="37">Insert</text><text x="344" y="31" textLength="34">Tools</text><text x="389" y="31" textLength="69">Simulation</text><text x="469" y="31" textLength="55">Window</text><text x="1152" y="31" textLength="100">Gimbaled Ma...</text></g><path d="M540 29 547 22M543 18 551 26M546 20 551 15" stroke="#333" stroke-width="2"/>
      <use href="#sys" x="604" y="-29"/>
      <path d="M1263 12H1533V39H1263Z" fill="#fff"/><path d="M1264 15H1282V34H1264Z" fill="#222"/><text x="1292" y="31" fill="#888" textLength="120">Search Commands</text><g transform="translate(1501 24) scale(-.65 .65)"><use href="#lens"/></g><g fill="none" stroke="#444" stroke-width="2"><circle cx="1564" cy="24" r="10"/><circle cx="1564" cy="22" r="4"/><circle cx="1612" cy="24" r="10"/><path d="M1656 32H1668" stroke-width="3"/></g><text x="1608" y="31">?</text>
      <g transform="translate(6 -23) scale(.934 .95)"><use href="#filters"/></g><path d="M30 49H1170M30 82H1725" stroke="#ddd" stroke-width="2"/><path d="M1170 49V81M86 85V180M839 85V180M1054 85V180M1232 85V180" stroke="#ccc" stroke-width="2"/>
      <g class="mid wide">
        <use href="#i-study" x="58" y="102"/><use href="#i-inter" x="131" y="102"/><use href="#i-clear" x="215" y="102"/><use href="#i-hole" x="292" y="102"/><use href="#i-meas" x="363" y="102"/><use href="#i-mark" x="424" y="102"/><use href="#i-mass" x="491" y="102"/><use href="#i-sect" x="566" y="102"/><use href="#i-sens" x="630" y="102"/><use href="#asm" x="700" y="102"/><use href="#i-perf" x="790" y="102"/><use href="#i-curv" x="874" y="102"/><use href="#i-symm" x="947" y="102"/><use href="#i-body" x="1018" y="102"/><use href="#i-comp" x="1096" y="102"/><use href="#i-check" x="1184" y="102"/><use href="#i-comp" x="1284" y="102" opacity=".35"/><use href="#i-xp" x="1398" y="102"/><use href="#i-flo" x="1494" y="102"/><use href="#i-drive" x="1594" y="102"/><use href="#i-cost" x="1687" y="102" opacity=".4"/>
        <text x="58" y="133" textLength="46">Design</text><text x="58" y="153" textLength="37">Study</text><text x="58" y="176">▾</text><text x="130" y="133" textLength="82">Interference</text><text x="130" y="153" textLength="64">Detection</text><text x="215" y="133" textLength="65">Clearance</text><text x="214" y="153" textLength="75">Verification</text><text x="292" y="133" textLength="32">Hole</text><text x="293" y="153" textLength="69">Alignment</text><text x="363" y="133" textLength="59">Measure</text><text x="424" y="133" textLength="51">Markup</text><text x="491" y="133" textLength="35">Mass</text><text x="491" y="153" textLength="68">Properties</text><text x="566" y="133" textLength="51">Section</text><text x="566" y="153" textLength="68">Properties</text><text x="630" y="133" textLength="46">Sensor</text><text x="700" y="133" textLength="64">Assembly</text><text x="700" y="153" textLength="82">Visualization</text><text x="790" y="133" textLength="84">Performance</text><text x="790" y="153" textLength="69">Evaluation</text><text x="874" y="133" textLength="65">Curvature</text><text x="947" y="133" textLength="67">Symmetry</text><text x="947" y="153" textLength="41">Check</text><text x="1018" y="133" textLength="34">Body</text><text x="1018" y="153" textLength="62">Compare</text><text x="1096" y="133" textLength="62">Compare</text><text x="1096" y="153" textLength="75">Documents</text><text x="1183" y="133" textLength="87">Check Active</text><text x="1183" y="153" textLength="70">Document</text><text x="1183" y="176">▾</text><g fill="#bbb"><text x="1285" y="133" textLength="98">3DEXPERIENCE</text><text x="1285" y="153" textLength="70">Simulation</text><text x="1285" y="174" textLength="69">Connector</text><text x="1687" y="133" textLength="46">Costing</text></g><text x="1398" y="133" textLength="114">SimulationXpress</text><text x="1398" y="153" textLength="103">Analysis Wizard</text><text x="1494" y="133" textLength="63">FloXpress</text><text x="1494" y="153" textLength="51">Analysis</text><text x="1494" y="174" textLength="48">Wizard</text><text x="1594" y="133" textLength="121">DriveWorksXpress</text><text x="1594" y="153" textLength="48">Wizard</text>
      </g>
      <path d="M30 182H420V211H30Z" fill="#dcdcdc"/><path d="M245 182H325V211H245Z" fill="#f8f8f8"/><path d="M30 181H1725M30 212H516M114 182V211M179 182V211M420 182V211" stroke="#bbb" stroke-width="2"/>
      <g class="wide"><text x="38" y="204" textLength="70">Assembly</text><text x="122" y="204" textLength="50">Layout</text><text x="187" y="204" textLength="49">Sketch</text><text x="251" y="204" textLength="67" font-weight="600">Evaluate</text><text x="332" y="204" textLength="79">Simulation</text></g>
      <path d="M30 220H514V236H30Z" fill="#fff"/><circle cx="271" cy="227" r="4" fill="#aaa"/><path d="M75 243H240V274H75Z" fill="#d5d5d5"/><path d="M30 274H514" stroke="#bbb" stroke-width="2"/><use href="#asm" x="54" y="258"/><path d="M84 247H105V269H84ZM90 247V269M94 253H103M94 260H103" fill="none" stroke="#3e81ab" stroke-width="3"/><path d="M129 247H143V258H129ZM136 258V270H146" fill="none" stroke="#777" stroke-width="2"/><path d="M177 246V270M165 258H189" stroke="#333" stroke-width="2"/><circle cx="177" cy="258" r="8" fill="none" stroke="#333" stroke-width="2"/><use href="#ball" x="219" y="258"/><path d="M498 251 505 258 498 265" fill="none" stroke="#333" stroke-width="3"/>
      <path d="M36 279H512V307H36Z" fill="#fff" stroke="#ccc"/><path d="M40 283H60L53 292V302H47V292Z" fill="#6d98b3"/><circle cx="67" cy="293" r="2"/>
      <use href="#asm" x="47" y="324"/><use href="#arr" x="45" y="354"/><use href="#fold" x="76" y="354"/><use href="#fold" x="76" y="385"/><use href="#arr" x="45" y="415"/><use href="#fold" x="76" y="415"/><use href="#plane" x="75" y="445"/><use href="#plane" x="75" y="476"/><use href="#plane" x="75" y="506"/><use href="#org" x="75" y="536"/><use href="#com" x="75" y="566"/><use href="#arr" x="45" y="596"/><use href="#asm" x="75" y="596"/><use href="#arr" x="45" y="627"/><use href="#asm" x="75" y="627"/><use href="#arr" x="45" y="657"/><path d="M66 648V665M71 650V668M79 648V665" stroke="#4784a4" stroke-width="4"/>
      <g class="wide"><text x="62" y="330" textLength="319">Gimbaled Mass  (Default&lt;Display State-1&gt;)</text><text x="92" y="361" textLength="52">History</text><text x="92" y="391" textLength="56">Sensors</text><text x="92" y="421" textLength="88">Annotations</text><text x="92" y="452" textLength="83">Front Plane</text><text x="92" y="482" textLength="73">Top Plane</text><text x="92" y="512" textLength="83">Right Plane</text><text x="92" y="543" textLength="46">Origin</text><text x="92" y="573" textLength="110">Center of Mass</text><text x="92" y="603" textLength="397">TXE-2 Assembly - CDR&lt;1&gt; (Default&lt;Display State-1&gt;)</text><text x="92" y="634" textLength="373">(-) Copy of Assem2&lt;1&gt; (Default&lt;Display State-1&gt;)</text><text x="92" y="664" textLength="45">Mates</text></g><path d="M30 674H516" stroke="#1f82cf" stroke-width="4"/>
      <path d="M517 182H1597V988H517Z" fill="url(#bg1)"/><path d="M517 182V988" stroke="#999" stroke-width="3"/><path d="M515 560H529V610H515Z" fill="#f2f2f2" stroke="#aaa"/><path d="M524 581 520 585 524 589" fill="none" stroke="#555"/>
      <path d="M598 182 1000 520M598 182 517 690M958 182 890 640M634 915 1060 906 850 715M517 768 634 915 680 640M517 728 850 715 1100 700" fill="none" stroke="#cdc9a5" stroke-width="2"/>
      <path d="M527 222H732V258H527Z" fill="#c4dcf1"/><path d="M527 222H577L584 240 577 258H527Z" fill="#eceae4"/><use href="#asm" x="559" y="240"/><use href="#com" x="601" y="240"/><text x="618" y="249" class="wide" textLength="97">Center of Mass</text><use href="#view" x="880" y="198"/><use href="#mdi" x="1442" y="199"/>
      <path d="M707 628C690 682 638 752 638 788C655 848 835 876 856 828C860 770 841 700 838 640Z" fill="url(#blackn)"/><g transform="rotate(9 781 619)"><ellipse cx="781" cy="625" rx="78" ry="34" fill="#2b211e"/><ellipse cx="781" cy="616" rx="77" ry="32" fill="#8d4b38"/><ellipse cx="781" cy="613" rx="51" ry="20" fill="#ac634e"/></g>
      <path d="M744 395 730 515Q735 555 754 583 750 602 751 604 795 632 834 605 830 595 870 543L895 420Z" fill="url(#copper)"/><path d="M711 550 728 534 750 575 742 586 721 574Z" fill="#82432f"/><path d="M724 374Q770 430 907 426L895 411 738 370Z" fill="#733729"/>
      <g transform="rotate(11 825 349)"><ellipse cx="825" cy="357" rx="108" ry="48" fill="#2e2928"/><ellipse cx="825" cy="349" rx="106" ry="49" fill="#8b8580"/><ellipse cx="825" cy="343" rx="92" ry="39" fill="#93918c" stroke="#4b4948" stroke-width="3"/></g>
      <path d="M785 335 797 330V315L806 310V289H801V280H825V298L845 295 855 306 845 313 851 326 872 337 855 355 835 344 836 366Q815 378 790 366Z" fill="#343638"/><path d="M835 331 860 340 860 350 840 350Z" fill="#8c4a36"/><path d="M788 345Q812 360 835 345M795 332 822 324M808 298H832" stroke="#858989" stroke-width="4" fill="none"/>
      <g fill="#202020"><circle cx="740" cy="330" r="8"/><circle cx="764" cy="300" r="8"/><circle cx="796" cy="291" r="8"/><circle cx="860" cy="304" r="8"/><circle cx="895" cy="322" r="8"/><circle cx="912" cy="349" r="8"/><circle cx="905" cy="376" r="8"/><circle cx="874" cy="389" r="8"/><circle cx="833" cy="389" r="8"/><circle cx="793" cy="380" r="8"/><circle cx="759" cy="360" r="8"/><circle cx="770" cy="338" r="7"/><circle cx="715" cy="607" r="6"/><circle cx="725" cy="624" r="6"/><circle cx="745" cy="636" r="6"/><circle cx="773" cy="642" r="6"/><circle cx="802" cy="645" r="6"/><circle cx="829" cy="641" r="6"/><circle cx="850" cy="628" r="6"/><circle cx="849" cy="607" r="6"/></g>
      <path d="M742 475 780 480 828 491 790 492M785 459V496" fill="none" stroke="#3c1812" stroke-width="3"/><text x="745" y="505" transform="rotate(8 745 505)" fill="#36150f" font-size="28" font-weight="700" textLength="80">TREL</text><path d="M809 460 815 426M808 437 816 424 819 437" fill="none" stroke="#0c1" stroke-width="6"/><path d="M809 460 794 435" stroke="#239" stroke-width="4"/>
      <g fill="none" stroke-width="5"><path d="M572 921H538" stroke="#c11"/><path d="M572 921 579 891M573 899 579 888 583 900" stroke="#1d2"/><path d="M572 921 558 904" stroke="#139"/></g><text x="526" y="922" font-size="14" fill="#c11">X</text><text x="580" y="879" font-size="14" fill="#1d2">Y</text><text x="552" y="899" font-size="14" fill="#139">Z</text>
      <path d="M1597 182H1725V1012H1597Z" fill="#f4f4f4"/><path d="M1597 182H1725V212H1597Z" fill="#bfc2c4"/><path d="M1597 182V1012" stroke="#aaa" stroke-width="3"/><text x="1611" y="204" font-weight="700" font-size="20" textLength="112">•SOLIDWORKS</text>
      <path d="M30 988H1595V1012H30Z" fill="#fafafa"/><path d="M30 1012H1725V1035H30Z" fill="#e6e6e6"/><path d="M48 988H114V1005H48Z" fill="#aeb7bf"/><path d="M190 989H434V1012H190Z" fill="#ddd"/><path d="M30 988H1595" stroke="#bbb" stroke-width="2"/><g class="wide"><text x="128" y="1008" font-weight="700" textLength="53">Model</text><text x="199" y="1008" textLength="72">3D Views</text><text x="293" y="1008" textLength="121">Motion Study 1</text><text x="31" y="1030" textLength="375">SOLIDWORKS Student Edition - Academic Use Only</text><text x="1344" y="1030" textLength="108">Under Defined</text><text x="1465" y="1030" textLength="125">Editing Assembly</text></g>
      <g class="dialog wide" transform="translate(885 0)"><rect class="dlg-shade" x="36" y="239" width="850" height="638" rx="10" fill="#f0f0f0" stroke="#aaa"/><path d="M37 280V249Q37 240 46 240H840V280Z" fill="#fff"/><g transform="translate(56 258) scale(.8)"><use href="#i-mass"/></g><text x="71" y="265" textLength="115">Mass Properties</text><path d="M683 258H699M749 252H760V264H749Z" fill="none" stroke="#999" stroke-width="2"/><g transform="translate(67 307) scale(.8)"><use href="#asm"/></g>
        <path d="M97 287H515V383H97Z" fill="#cce4f7" stroke="#77b9e5" stroke-width="3"/><text x="101" y="304" textLength="155">Gimbaled Mass.SLDASM</text>
        <g fill="#fdfdfd" stroke="#d5d5d5" stroke-width="2"><rect x="560" y="317" width="101" height="36" rx="4"/><rect x="97" y="392" width="266" height="36" rx="4"/><rect x="388" y="392" width="126" height="36" rx="4"/><rect x="97" y="827" width="120" height="36" rx="4"/><rect x="301" y="827" width="126" height="36" rx="4"/><rect x="493" y="827" width="167" height="36" rx="4"/><path d="M360 542H658V569H360Z"/><path d="M98 446H115V462H98ZM98 516H115V532H98Z" stroke="#777"/></g>
        <text x="581" y="342" textLength="60">Options...</text><text x="146" y="417" textLength="168">Override Mass Properties...</text><text x="415" y="417" textLength="73">Recalculate</text><text x="119" y="460" textLength="225">Include hidden bodies/components</text><text x="119" y="530" textLength="140">Show weld bead mass</text><text x="125" y="563" textLength="228">Report coordinate values relative to:</text><text x="366" y="561" textLength="75">-- default --</text><path d="M643 552 648 557 653 552" fill="none" stroke="#999" stroke-width="2"/>
        <path d="M98 816V577H790" fill="none" stroke="#999" stroke-width="3"/><path d="M770 602H790V669H770Z" fill="#777"/>
        <text x="98" y="597" textLength="220">Mass properties of Gimbaled Mass</text><text x="118" y="617" textLength="142">Configuration: Default</text><text x="118" y="638" textLength="201">Coordinate system: -- default --</text><text x="98" y="679" textLength="181">Mass = 28.27880434 pounds</text><text x="98" y="720" textLength="235">Volume = 170.67121247 cubic inches</text><text x="98" y="761" textLength="282">Surface area = 2183.18241702 square inches</text><text x="98" y="803" textLength="160">Center of mass: ( inches )</text><path d="M126 815H220" stroke="#777" stroke-width="2" stroke-dasharray="7 4"/><text x="143" y="851" textLength="28">Help</text><text x="344" y="851" textLength="39">Print...</text><text x="518" y="851" textLength="114">Copy to Clipboard</text>
      </g>
    </svg>

    <svg class="ink" viewBox="677 484 1223 526">
      <g class="hand">
        <g transform="translate(730 520) rotate(-1)"><text textLength="134" font-size="23"><tspan class="slab">I</tspan>= mr² = 700 lb in²</text></g>
        <text x="729" y="564" font-size="24" textLength="65">M= 28 lb</text><text x="729" y="597" font-size="25" textLength="60">D= 5 in</text>
        <g transform="translate(764 650) rotate(-4)"><text font-size="31" textLength="17">α</text><text x="24" y="-1" font-size="22" textLength="80"><tspan class="slab">I</tspan> = ϒ=Fr</text></g>
        <text x="771" y="690" font-size="27" textLength="26">α=</text><text x="813" y="678" font-size="18" textLength="16">Fr</text><text class="slab" x="813" y="702" font-size="19">I</text><text x="833" y="690" font-size="20" textLength="9">=</text>
        <g transform="translate(857 677) rotate(-4)"><text font-size="18" textLength="64">850 lb<tspan dy="4" font-size="10">f</tspan><tspan dy="-4"> (61mm)</tspan></text></g><text x="872" y="702" font-size="18" textLength="48">700 lbin²</text><g transform="translate(927 636) rotate(-11)"><text font-size="19" textLength="35">0.2ft</text></g><text x="932" y="683" font-size="20" textLength="12">=</text>
        <text x="958" y="675" font-size="19" textLength="44">850 lb<tspan font-size="12" dy="3">f</tspan></text><text x="963" y="700" font-size="18" textLength="38">700 lb<tspan font-size="12" dy="3">m</tspan></text><text x="1016" y="674" font-size="18" textLength="61">32.2 lbm ft/s²</text><text x="1017" y="698" font-size="18" textLength="21">1 lb<tspan font-size="12" dy="3">f</tspan></text>
        <text x="1093" y="688" font-size="20" textLength="64">= 39.1 ft/s²</text>
        <g transform="translate(958 752) rotate(-2)"><text font-size="21" textLength="53">39.1ft/s²</text></g><text x="1026" y="750" font-size="19" textLength="28">0.2ft</text><text x="1032" y="775" font-size="17" textLength="18">in²</text><text x="1083" y="753" font-size="18" textLength="29">144in²</text><text x="1083" y="779" font-size="17" textLength="20">1ft²</text><text x="1121" y="763" font-size="20">=</text><text x="1139" y="759" font-size="20" textLength="44">1126.08</text><text x="1191" y="761" font-size="19" textLength="53">rad/sec²</text>
        <text x="766" y="863" font-size="31" textLength="15">α</text><text class="slab" x="788" y="854" font-size="22">I</text><text x="784" y="888" font-size="26">r</text><text x="811" y="869" font-size="28" textLength="17">=</text><text x="840" y="864" font-size="29" textLength="12">F</text><text x="857" y="864" font-size="24" textLength="14">=</text>
        <text x="882" y="854" font-size="23" textLength="24">700</text><text x="911" y="853" font-size="17" textLength="18">lbin²</text><text x="946" y="838" font-size="17" textLength="12">2π</text><text x="945" y="853" font-size="14" textLength="17">180</text><g transform="translate(965 842) rotate(-4)"><text font-size="17" textLength="32">rad/sec²</text></g><text x="920" y="876" font-size="20" textLength="30">0.2 ft</text>
        <text x="1023" y="850" font-size="18" textLength="18">lb<tspan dy="3" font-size="12">f</tspan></text><text x="1017" y="874" font-size="21" textLength="23">32.2</text><text x="1045" y="873" font-size="18" textLength="50">lb<tspan dy="3" font-size="11">m</tspan><tspan dy="-3"> ft/s²</tspan></text><text x="1137" y="849" font-size="18" textLength="23">1ft²</text><text x="1132" y="869" font-size="18" textLength="36">144in²</text><text x="1194" y="858" font-size="24" textLength="13">=</text><text x="1218" y="858" font-size="22" textLength="27">0.02</text><text x="1257" y="857" font-size="18" textLength="13">lb<tspan dy="3" font-size="11">f</tspan></text>
        <g transform="translate(734 937) rotate(-3)"><text font-size="19" textLength="9">2</text><text x="19" font-size="18" textLength="56">degree/sec²</text><text x="82" font-size="19" textLength="9">=</text></g><text x="833" y="922" font-size="17" textLength="16">2π</text><text x="833" y="941" font-size="15" textLength="18">180</text><g transform="translate(855 926) rotate(-5)"><text font-size="18" textLength="43">rad/sec²</text></g>
      </g>
      <g fill="none" stroke="#333" stroke-width="1.200">
        <path d="M811 688 828 685M854 689Q863 681 887 681L921 680M905 653Q908 637 923 632L918 631M923 632 922 638M962 681 1003 681M1012 678H1072M893 654Q885 663 892 680M918 654Q923 669 914 680M1011 663Q1000 688 1013 713M1081 656Q1092 682 1074 704M1025 731Q1010 757 1024 783M1057 730Q1071 757 1053 781M1018 758 1053 756M1081 733Q1067 761 1083 787M1113 737Q1125 760 1103 781M1081 762 1105 762"/>
        <path d="M766 875 803 863M879 860H916Q930 853 954 851L1002 851M944 841 960 839M938 829Q932 838 939 852M999 824Q1009 838 997 849M1017 830Q1003 860 1013 879L1017 879M1017 856 1055 849 1096 844M1102 832Q1115 855 1099 874M1127 829Q1115 855 1124 878L1130 879M1131 854 1176 850M1178 829Q1190 855 1175 875M834 927 850 924"/>
        <path d="M709 817Q726 820 775 816T885 809T1060 811T1220 812L1277 811" stroke-width="2"/><path d="M1303 849V864"/>
      </g>
      <path d="M981 681 1001 667M981 700 1000 689M1036 674 1048 662M1016 702 1036 688M980 750 991 737M1041 748 1052 736M1031 776 1049 761M1098 751 1112 743M1082 780 1104 764M914 850 930 839M941 875 952 860M1046 875 1057 862M1061 876 1077 854M1134 851 1159 834M1149 870 1170 852" fill="none" stroke="#23b5ee" stroke-width="1.700"/>
    </svg>

    <div class="vbar"><svg width="12" height="7"><path d="M1 6 6 1 11 6" fill="none" stroke="#777" stroke-width="1.400"/></svg><i></i><svg width="12" height="7"><path d="M1 1 6 6 11 1" fill="none" stroke="#777" stroke-width="1.400"/></svg></div>
    <div class="hbar"><svg width="7" height="12"><path d="M6 1 1 6 6 11" fill="none" stroke="#777" stroke-width="1.400"/></svg><i></i><svg width="7" height="12"><path d="M1 1 6 6 1 11" fill="none" stroke="#777" stroke-width="1.400"/></svg></div>
  </div>
</main>
<script src="fit.js"></script>
</body>
</html>
```
FILE: fit.js
```js
// Labels with a set length scale their glyphs as well as their spacing.
document.querySelectorAll('text[textLength]').forEach(function (label) {
  label.setAttribute('lengthAdjust', 'spacingAndGlyphs');
});
```
FILE: styles.css
```css
* { box-sizing: border-box; }
body { margin: 0; width: 1920px; height: 1037px; overflow: hidden; background: #ededed; font: 15.4px/20px "Open Sans", "Noto Sans", sans-serif; color: #111; }
svg { flex: none; display: block; }
.defs { position: absolute; }
.chev { color: #444; }
.chev.dark { color: #111; }

.titlebar { height: 40px; background: #7719aa; color: #fff; display: grid; grid-template-columns: 1fr auto 1fr; align-items: center; font-size: 15px; }
.history { display: flex; gap: 35px; padding-left: 18px; }
.dim { opacity: .6; }
.app-name { padding-top: 1px; font-size: 15.6px; letter-spacing: .05px; }
.window-side { display: flex; justify-content: flex-end; align-items: center; padding-right: 1px; }
.user { padding-top: 1px; margin-right: 51px; font-size: 15.3px; }
.tsep { width: 1px; height: 20px; background: #c9a3dd; margin-right: 30px; }
.winbtn { width: 57px; display: flex; justify-content: center; }

.ribbon { height: 91px; background: #f3f2f1; border-bottom: 1px solid #c8c6c4; box-shadow: 0 1px 8px rgba(0,0,0,.22); position: relative; z-index: 2; color: #444; }
.tabs { height: 40px; display: flex; padding-left: 19px; }
.tablist { display: grid; grid-template-columns: 86px 82px 80px 75px 60px; }
.tab { height: 39px; padding-top: 10px; letter-spacing: -.1px; }
.tab.active { font-weight: 600; border-bottom: 4px solid #7719aa; width: 46px; letter-spacing: -.5px; }
.quick { margin-left: auto; display: flex; align-items: center; padding: 0 13px 0 0; gap: 25px; }
.q { display: flex; align-items: center; gap: 5px; }
.q.cloud { margin-right: -4px; }
.share { width: 65px; font-size: 15px; letter-spacing: -.2px; white-space: nowrap; }
.share + .q { margin: 0 -1px 0 5px; }
.tools { height: 50px; display: flex; align-items: center; padding-left: 8px; }
.cell { width: 50px; flex: none; display: flex; justify-content: center; }
.cell.first { margin-left: 7px; }
.c48 { width: 48px; } .c49 { width: 49px; } .c51 { width: 51px; } .c52 { width: 52px; } .c78 { width: 78px; } .c79 { width: 79px; }
.sep { width: 1px; height: 40px; background: #c0bebc; flex: none; }
.fontbox { display: flex; width: 212px; height: 32px; margin-left: 13px; border: 1px solid #c0bdbb; background: #fff; color: #222; font-size: 15px; line-height: 32px; }
.face { width: 132px; padding-left: 9px; border-right: 1px solid #c0bdbb; }
.size { padding-left: 9px; }
.glyph { font-size: 25px; line-height: 24px; }
.bold { font-weight: 700; font-size: 24px; color: #333; }
.ital { font-family: "Liberation Serif", serif; font-size: 26px; }
.under { border-bottom: 2px solid #666; line-height: 23px; font-size: 22px; }
.numcell { gap: 3px; align-items: center; }
.nums { display: flex; flex-direction: column; margin-top: -3px; }
.nums b { font-size: 8.5px; line-height: 9px; font-weight: 600; color: #2b88d8; }
.todo, .styles { background: #fff; border: 1px solid #c0bdbb; display: flex; align-items: center; }
.todo { width: 87px; height: 46px; margin: 0 5px; padding-left: 18px; gap: 25px; }
.styles { width: 217px; height: 42px; margin: 0 5px; justify-content: space-between; padding: 0 6px 0 17px; color: #1e4e79; font-size: 24px; letter-spacing: -.3px; }
.dictate { display: flex; align-items: center; padding-left: 16px; }
.dictate span { margin: 0 31px 0 16px; width: 50px; letter-spacing: -.25px; font-size: 15px; }

.work { height: 899px; display: flex; }
.rail { width: 60px; background: #f3f2f1; border-right: 1px solid #dddbd9; }
.rail-item { height: 55px; display: flex; align-items: center; padding-left: 19px; }
.rail-item.on { background: #e1dfdd; border-left: 4px solid #7719aa; padding-left: 15px; }
.nav { width: 617px; background: #faf9f8; display: flex; flex-direction: column; border-right: 1px solid #e1dfdd; }
.notebook { height: 55px; border-bottom: 1px solid #e6e4e2; display: flex; align-items: center; padding: 0 21px 0 13px; }
.notebook b { font-weight: 600; font-size: 15px; margin: 2px 11px 0 10px; letter-spacing: -.3px; }
.sort { margin-left: auto; }
.cols { flex: 1; display: flex; }
.sections { width: 242px; border-right: 1px solid #e6e4e2; display: flex; flex-direction: column; }
.pages { flex: 1; display: flex; flex-direction: column; }
.row { height: 45px; display: flex; align-items: center; padding: 0 0 2px 25px; }
.row.parent { padding-left: 7px; gap: 7px; }
.row.l1 { padding-left: 40px; }
.row.l2 { padding-left: 55px; }
.row.sel { background: #e1dfdd; border-left: 3px solid #7719aa; }
.pages .row.sel { padding-left: 52px; }
.sections .row.sel { padding: 0 0 0 14px; gap: 18px; }
.add { margin-top: auto; height: 56px; border-top: 1px solid #e6e4e2; display: flex; align-items: center; gap: 11px; padding: 0 0 2px 12px; color: #7719aa; font-weight: 600; }

.canvas { flex: 1; position: relative; background: #fff; overflow: hidden; }
.shot, .ink, .vbar, .hbar { position: absolute; }
.shot { font: 17.5px "Open Sans", "Noto Sans", sans-serif; fill: #333; }
.shot .wide { font-size: 19.5px; }
.shot .mid text { text-anchor: middle; }
.shot-a { left: 41px; top: 14px; width: 629px; height: 338px; }
.shot-b { left: 678px; top: 0; width: 565px; height: 344px; }
.dlg-shade { filter: drop-shadow(0 6px 22px rgba(0,0,0,.5)); }
.ink { left: 0; top: 353px; width: 1223px; height: 526px; }
.hand { font-family: Lato, "Open Sans", sans-serif; font-weight: 300; fill: #222; stroke: #222; stroke-width: .15px; }
.slab { font-family: "Liberation Mono", monospace; stroke: none; }
.vbar { right: 0; top: 0; width: 20px; height: 879px; background: rgba(226,226,226,.8); display: flex; flex-direction: column; align-items: center; padding: 6px 0; }
.vbar i { width: 20px; height: 441px; margin: 56px 0 auto; background: rgba(176,176,176,.92); }
.hbar { left: 0; bottom: 0; width: 1243px; height: 20px; background: #e9e9e9; display: flex; align-items: center; padding: 0 6px 0 7px; }
.hbar i { width: 774px; height: 20px; margin: 0 auto 0 6px; background: #b9b9b9; }
```
